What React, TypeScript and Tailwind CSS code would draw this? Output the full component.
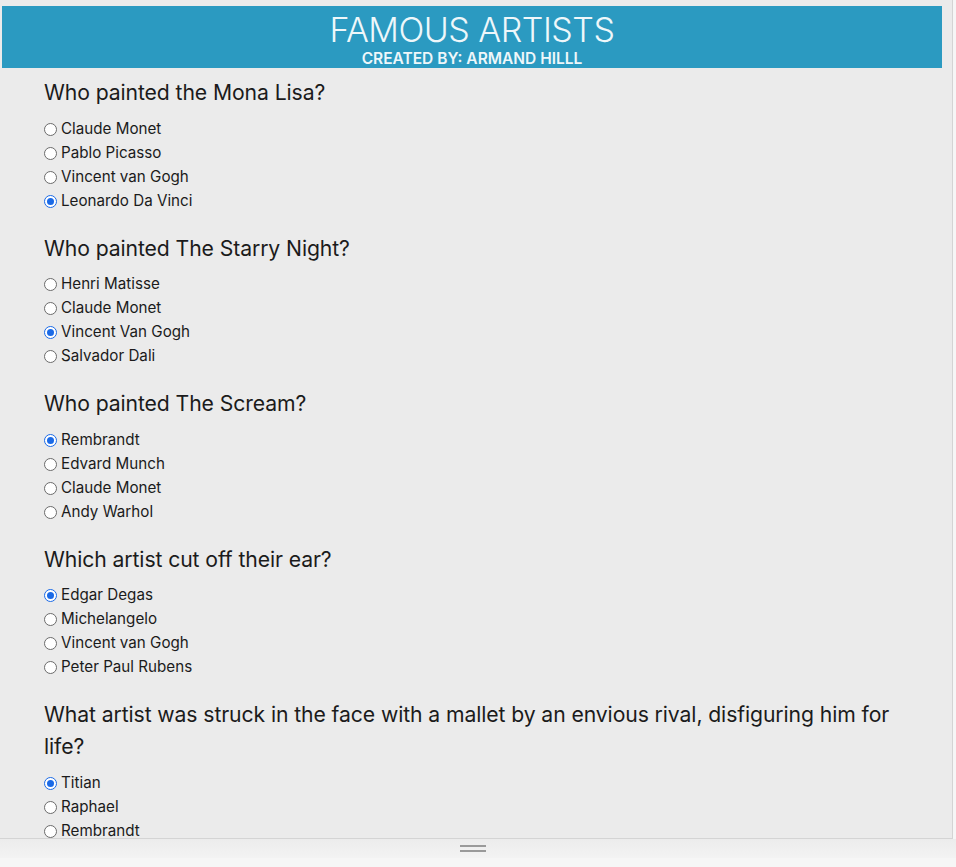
import React from "react";

type Q = { q: string; options: string[]; checked: number };

const questions: Q[] = [
  { q: "Who painted the Mona Lisa?", options: ["Claude Monet", "Pablo Picasso", "Vincent van Gogh", "Leonardo Da Vinci"], checked: 3 },
  { q: "Who painted The Starry Night?", options: ["Henri Matisse", "Claude Monet", "Vincent Van Gogh", "Salvador Dali"], checked: 2 },
  { q: "Who painted The Scream?", options: ["Rembrandt", "Edvard Munch", "Claude Monet", "Andy Warhol"], checked: 0 },
  { q: "Which artist cut off their ear?", options: ["Edgar Degas", "Michelangelo", "Vincent van Gogh", "Peter Paul Rubens"], checked: 0 },
  {
    q: "What artist was struck in the face with a mallet by an envious rival, disfiguring him for life?",
    options: ["Titian", "Raphael", "Rembrandt"],
    checked: 0,
  },
];

function Radio({ on }: { on: boolean }) {
  if (on) {
    return (
      <span className="flex h-[13px] w-[13px] shrink-0 items-center justify-center rounded-full border-[1.5px] border-[#1b6ae6] bg-white">
        <span className="h-[7px] w-[7px] rounded-full bg-[#1b6ae6]" />
      </span>
    );
  }
  return <span className="h-[13px] w-[13px] shrink-0 rounded-full border border-[#6b6b6b] bg-white" />;
}

export default function App() {
  return (
    <div className="h-[867px] w-[956px] overflow-hidden bg-[#f6f6f6]" style={{ fontFamily: "Inter, 'Noto Sans', sans-serif" }}>
      <div className="flex h-[839px] w-[953px] flex-col overflow-hidden border-r border-b border-[#d4d4d4] bg-[#ebebeb]">
        <div className="pl-[2px] pt-[6px]">
          <div className="flex h-[62px] w-[940px] flex-col items-center bg-[#2b9ac1] text-[#eef7fa]">
            <div className="mt-[6px] text-[34px] font-light leading-[36px] tracking-[-0.5px]">FAMOUS ARTISTS</div>
            <div className="mt-[2px] text-[15.5px] font-semibold leading-[17px]">CREATED BY: ARMAND HILLL</div>
          </div>
        </div>
        <div className="flex flex-col pl-[44px] pr-[44px] pt-[8px] text-[#1b1b1b]">
          {questions.map((item, i) => (
            <div key={i} className="mb-[19.6px] flex flex-col">
              <div className="text-[21.2px] leading-[32px] tracking-[-0.1px]">{item.q}</div>
              <div className="mt-[8px] flex flex-col">
                {item.options.map((o, j) => (
                  <label key={j} className="flex h-[24px] items-center gap-[4px] pt-[2px] text-[15.2px]">
                    <Radio on={j === item.checked} />
                    <span>{o}</span>
                  </label>
                ))}
              </div>
            </div>
          ))}
        </div>
      </div>
      <div className="flex h-[19px] w-[956px] flex-col items-center justify-center gap-[3px] bg-gradient-to-b from-[#ececec] to-[#f3f3f3] pr-[10px]">
        <div className="h-[2px] w-[26px] bg-[#9a9a9a]" />
        <div className="h-[2px] w-[26px] bg-[#9a9a9a]" />
      </div>
    </div>
  );
}
